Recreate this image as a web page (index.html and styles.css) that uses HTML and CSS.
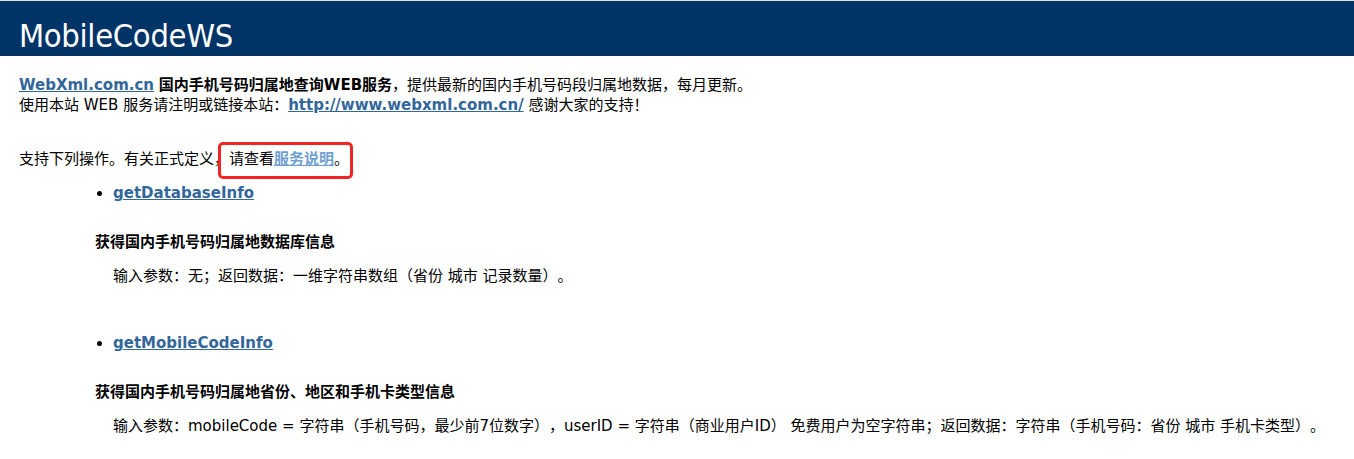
FILE: index.html
```html
<!DOCTYPE html>
<html lang="zh-CN">
<head>
<meta charset="utf-8">
<title>MobileCodeWS Web 服务</title>
<link rel="stylesheet" href="styles.css">
</head>
<body>
<div class="page">
  <p class="heading1">MobileCodeWS</p>
  <div class="content">
    <p class="intro-lines"><a href="#">WebXml.com.cn</a> <strong>国内手机号码归属地查询WEB服务</strong>，提供最新的国内手机号码段归属地数据，每月更新。<br>使用本站 WEB 服务请注明或链接本站：<strong><a href="#">http://www.webxml.com.cn/</a></strong> 感谢大家的支持！</p>
    <p class="intro">支持下列操作。有关正式定义，请查看<a class="visited" href="#">服务说明</a>。<span class="mark"></span></p>
    <ul class="ops">
      <li class="op">
        <div class="op-name"><span class="bullet"></span><a href="#">getDatabaseInfo</a></div>
        <h3 class="op-title">获得国内手机号码归属地数据库信息</h3>
        <p class="op-desc">输入参数：无；返回数据：一维字符串数组（省份 城市 记录数量）。</p>
      </li>
      <li class="op">
        <div class="op-name"><span class="bullet"></span><a href="#">getMobileCodeInfo</a></div>
        <h3 class="op-title">获得国内手机号码归属地省份、地区和手机卡类型信息</h3>
        <p class="op-desc">输入参数：mobileCode = 字符串（手机号码，最少前7位数字），userID = 字符串（商业用户ID） 免费用户为空字符串；返回数据：字符串（手机号码：省份 城市 手机卡类型）。</p>
      </li>
    </ul>
  </div>
</div>
</body>
</html>
```
FILE: styles.css
```css
html, body {
  margin: 0;
  padding: 0;
  background: #ffffff;
}
body {
  color: #000000;
  font-family: "DejaVu Sans", "Noto Sans CJK SC", sans-serif;
  font-size: 15px;
  overflow: hidden;
  text-spacing-trim: space-all;
}
.page {
  border-top: 1px solid #dcdcdc;
}
.heading1 {
  margin: 0;
  background: #003366;
  color: #ffffff;
  font-family: "DejaVu Sans Condensed", "DejaVu Sans", sans-serif;
  font-size: 32.4px;
  font-weight: normal;
  height: 40px;
  line-height: 40px;
  padding-top: 15px;
  padding-left: 19px;
  letter-spacing: -0.3px;
}
.content {
  padding-left: 19px;
}
a {
  color: #336699;
  font-weight: bold;
  text-decoration: underline;
}
a.visited {
  color: #6f9fd0;
}
strong {
  font-weight: bold;
}
.intro-lines {
  margin: 0;
  padding-top: 19px;
  line-height: 20px;
}
.intro {
  margin: 34px 0 0;
  line-height: 20px;
  position: relative;
}
.mark {
  position: absolute;
  left: 199px;
  top: -7px;
  width: 129px;
  height: 31px;
  border: 3px solid #f22525;
  border-radius: 5px;
}
.ops {
  list-style: none;
  margin: 0;
  padding: 0;
}
.op {
  margin: 0;
  padding: 0;
}
.op-name {
  display: flex;
  align-items: center;
  padding-left: 78px;
  padding-top: 14px;
  line-height: 20px;
}
.op + .op .op-name {
  padding-top: 47px;
}
.bullet {
  width: 5px;
  height: 5px;
  border-radius: 50%;
  background: #000;
  margin-right: 11px;
}
.op-title {
  margin: 0;
  padding-left: 76px;
  padding-top: 29px;
  font-size: 15px;
  font-weight: bold;
  line-height: 20px;
}
.op-desc {
  margin: 0;
  padding-left: 94px;
  padding-top: 14px;
  line-height: 20px;
}
```
